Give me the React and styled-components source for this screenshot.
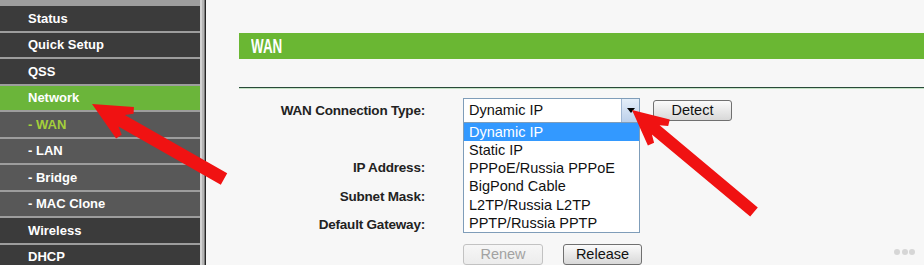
import React from "react";
import styled, { createGlobalStyle } from "styled-components";

const GlobalStyle = createGlobalStyle`
	html, body {
		margin: 0;
		padding: 0;
		background: #f7f7f7;
		font-family: "Liberation Sans", Arial, sans-serif;
	}
`;

const MENU = [
	{ label: "Status", kind: "top" },
	{ label: "Quick Setup", kind: "top" },
	{ label: "QSS", kind: "top" },
	{ label: "Network", kind: "active" },
	{ label: "- WAN", kind: "sub", current: true },
	{ label: "- LAN", kind: "sub" },
	{ label: "- Bridge", kind: "sub" },
	{ label: "- MAC Clone", kind: "sub" },
	{ label: "Wireless", kind: "top" },
	{ label: "DHCP", kind: "top" },
];

const TYPES = [
	"Dynamic IP",
	"Static IP",
	"PPPoE/Russia PPPoE",
	"BigPond Cable",
	"L2TP/Russia L2TP",
	"PPTP/Russia PPTP",
];

// chunky annotation arrow, tip -> tail, in page coordinates
function arrowPoints(tip, tail, shaft = 6.5, headLen = 38, headW = 18) {
	const dx = tail[0] - tip[0];
	const dy = tail[1] - tip[1];
	const len = Math.hypot(dx, dy);
	const ux = dx / len;
	const uy = dy / len;
	const px = -uy;
	const py = ux;
	const local = [
		[0, 0],
		[headLen, -headW],
		[headLen + 3, -(headW - 6)],
		[headLen - 4, -shaft],
		[len, -shaft],
		[len, shaft],
		[headLen - 4, shaft],
		[headLen + 3, headW - 6],
		[headLen, headW],
	];
	return local
		.map(([a, b]) => `${(tip[0] + a * ux + b * px).toFixed(1)},${(tip[1] + a * uy + b * py).toFixed(1)}`)
		.join(" ");
}

const App = () => {
	return (
		<Page>
			<GlobalStyle />
			<Sidebar>
				<Menu>
					{MENU.map((item) => (
						<MenuItem key={item.label} kind={item.kind} current={item.current}>
							{item.label}
						</MenuItem>
					))}
				</Menu>
			</Sidebar>

			<Content>
				<Header>
					<HeaderTitle>WAN</HeaderTitle>
				</Header>
				<Rule />
				<Form>
					<Label>WAN Connection Type:</Label>
					<Controls>
						<Select>
							<SelectValue>Dynamic IP</SelectValue>
							<SelectArrow>
								<svg width="8" height="5" viewBox="0 0 8 5">
									<path d="M0 0 H8 L4 5 Z" fill="#000" />
								</svg>
							</SelectArrow>
							<Options>
								{TYPES.map((t, i) => (
									<Option key={t} selected={i === 0}>
										{t}
									</Option>
								))}
							</Options>
						</Select>
						<Button>Detect</Button>
					</Controls>

					<Label />
					<span />
					<Label>IP Address:</Label>
					<span />
					<Label>Subnet Mask:</Label>
					<span />
					<Label>Default Gateway:</Label>
					<span />
					<Label />
					<Buttons>
						<Button disabled width={80}>
							Renew
						</Button>
						<Button width={79}>Release</Button>
					</Buttons>
				</Form>
			</Content>

			<Dots>
				<Dot />
				<Dot />
				<Dot />
			</Dots>

			<Annotations width="924" height="265" viewBox="0 0 924 265">
				<polygon points={arrowPoints([92, 104], [224, 179])} fill="#f01212" />
				<polygon points={arrowPoints([632, 110], [754, 212], 6, 35, 17)} fill="#f01212" />
			</Annotations>
		</Page>
	);
};

const Page = styled.div`
	position: relative;
	display: flex;
	width: 924px;
	height: 265px;
	overflow: hidden;
	background: #f7f7f7;
`;

const Sidebar = styled.div`
	flex: none;
	width: 206px;
	background: linear-gradient(
		to right,
		#9d9d9d 0 200px,
		#d2d2d2 200px 202px,
		#b4b4b4 202px 204px,
		#7c7c7c 204px 205px,
		#262626 205px 206px
	);
`;

const Menu = styled.div`
	display: flex;
	flex-direction: column;
	gap: 2px;
	width: 200px;
	padding-top: 6px;
`;

const MenuItem = styled.div`
	height: 24.5px;
	display: flex;
	align-items: center;
	padding-left: 28px;
	font-size: 13px;
	font-weight: bold;
	color: ${(props) => (props.current ? "#a4cf3a" : "#ffffff")};
	background: ${(props) =>
		props.kind === "active" ? "#6bb53a" : props.kind === "sub" ? "#585858" : "#3b3b3b"};
`;

const Content = styled.div`
	flex: 1;
	padding: 33px 0 0 33px;
`;

const Header = styled.div`
	height: 26px;
	display: flex;
	align-items: center;
	padding-left: 12px;
	background: #6ab733;
`;

const HeaderTitle = styled.span`
	display: inline-block;
	font-size: 20px;
	font-weight: bold;
	color: #ffffff;
	transform: scaleX(0.67);
	transform-origin: left center;
`;

const Rule = styled.div`
	margin-top: 28px;
	height: 1px;
	background: #284a3a;
	border-bottom: 1px solid #c4e2c4;
`;

const Form = styled.div`
	display: grid;
	grid-template-columns: 186px auto;
	grid-auto-rows: 28.6px;
	column-gap: 38px;
	align-items: center;
	margin-top: 7px;
`;

const Label = styled.div`
	text-align: right;
	font-size: 13.5px;
	font-weight: bold;
	letter-spacing: -0.2px;
	color: #222222;
`;

const Controls = styled.div`
	display: flex;
	align-items: center;
	gap: 13px;
`;

const Select = styled.div`
	position: relative;
	display: flex;
	width: 177px;
	height: 25px;
	box-sizing: border-box;
	border: 1px solid #7f9db9;
	background: #ffffff;
`;

const SelectValue = styled.div`
	flex: 1;
	display: flex;
	align-items: center;
	padding-left: 5px;
	font-size: 14.5px;
	color: #111111;
`;

const SelectArrow = styled.div`
	width: 17px;
	display: flex;
	align-items: center;
	justify-content: center;
	border-left: 1px solid #9fb6d2;
	background: linear-gradient(#e4eef9, #bcd0ea);
`;

const Options = styled.div`
	position: absolute;
	top: 100%;
	left: -1px;
	width: 177px;
	box-sizing: border-box;
	border: 1px solid #7f9db9;
	background: #ffffff;
	z-index: 2;
`;

const Option = styled.div`
	height: 18.2px;
	line-height: 18.2px;
	padding-left: 5px;
	font-size: 14.5px;
	color: ${(props) => (props.selected ? "#ffffff" : "#111111")};
	background: ${(props) => (props.selected ? "#3399ff" : "transparent")};
`;

const Button = styled.button`
	width: ${(props) => (props.width || 79) + "px"};
	height: 21px;
	padding: 0;
	border: 1px solid ${(props) => (props.disabled ? "#c2c2c2" : "#707070")};
	border-radius: 3px;
	background: ${(props) =>
		props.disabled ? "linear-gradient(#f6f6f6, #ececec)" : "linear-gradient(#fbfbfb, #e9e9e9 50%, #d8d8d8)"};
	font-family: "Liberation Sans", Arial, sans-serif;
	font-size: 14.5px;
	color: ${(props) => (props.disabled ? "#a2a2a2" : "#111111")};
`;

const Buttons = styled.div`
	display: flex;
	gap: 20px;
	padding-top: 2px;
`;

const Dots = styled.div`
	position: absolute;
	right: 9px;
	bottom: 10px;
	display: flex;
	gap: 1.5px;
`;

const Dot = styled.span`
	width: 6px;
	height: 6px;
	border-radius: 50%;
	background: #d6d6d6;
`;

const Annotations = styled.svg`
	position: absolute;
	top: 0;
	left: 0;
	pointer-events: none;
	z-index: 5;
`;

export default App;
